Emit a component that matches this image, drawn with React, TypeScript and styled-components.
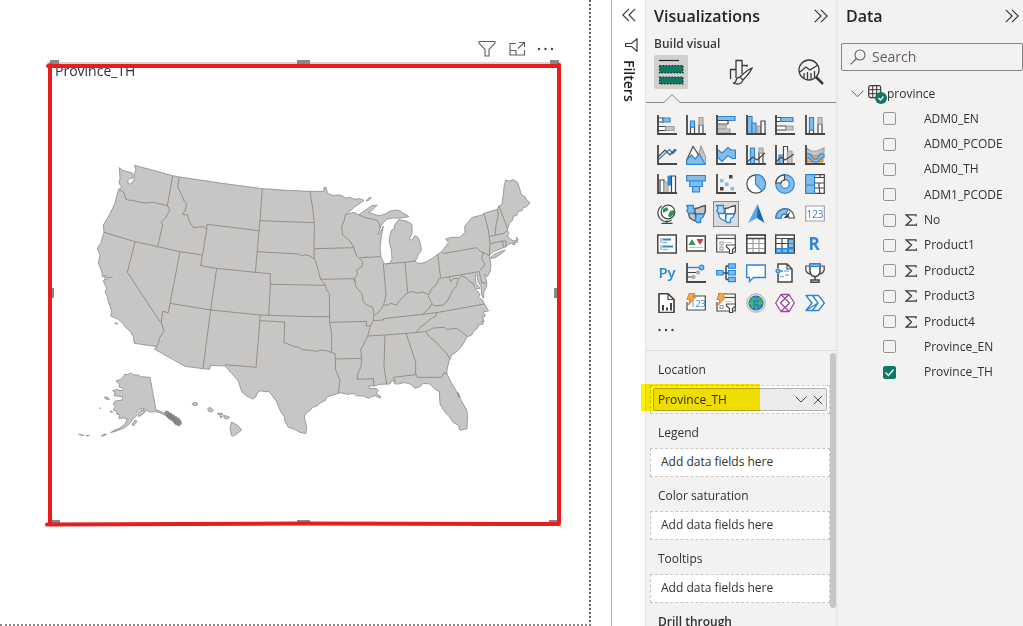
import React from "react";
import styled, { createGlobalStyle, css } from "styled-components";

const ink = "#484644";
const blue = "#2b88d8";
const sky = "#83bdeb";
const gray = "#a19f9d";
const silver = "#c8c6c4";

const GlobalStyle = createGlobalStyle`
  * { box-sizing: border-box; }
  body {
    margin: 0;
    background: #fff;
    color: #323130;
    font-family: "Open Sans", "Noto Sans", sans-serif;
    font-size: 12px;
    line-height: 16px;
  }
  button, input { font: inherit; color: inherit; }
  h2, h3, ul { margin: 0; padding: 0; font: inherit; }
  svg { display: block; }
`;

const Workspace = styled.div`
  display: flex;
  height: 100vh;
  overflow: hidden;
`;

/* ---------- report canvas ---------- */

const Canvas = styled.main`
  flex: 1;
  min-width: 0;
  padding-right: 20px;
  display: flex;
`;

const ReportPage = styled.div`
  flex: 1;
  min-width: 0;
  padding: 36px 28px 0 47px;
  border-right: 2px dotted #605e5c;
  border-bottom: 2px dotted #8a8886;
`;

const VisualTools = styled.div`
  display: flex;
  justify-content: flex-end;
  align-items: center;
  gap: 10px;
  height: 26px;
  padding-right: 7px;
`;

const IconButton = styled.button`
  display: flex;
  align-items: center;
  justify-content: center;
  padding: 0;
  border: 0;
  background: none;
  color: #484644;
  min-width: 14px;
  height: 24px;
`;

const Visual = styled.section`
  position: relative;
  height: 464px;
  max-width: 514px;
  padding: 0 21px 0 8px;
  border-top: 2px solid #d8d6d4;
`;

const VisualTitle = styled.h3`
  height: 13px;
  font-size: 14px;
  line-height: 13px;
`;

const MapFrame = styled.div`
  padding: 78px 0 0 15px;
`;

const Annotation = styled.svg`
  position: absolute;
  left: 0;
  top: -2px;
  width: 100%;
  height: 466px;
  overflow: visible;
`;

/* ---------- panes ---------- */

const FiltersPane = styled.aside`
  width: 34px;
  flex: none;
  display: flex;
  flex-direction: column;
  align-items: center;
  padding: 3px 0 0;
  border-left: 1px solid #b3b0ad;
  background: #fff;
`;

const FilterGlyph = styled.div`
  padding: 11px 0 8px 6px;
`;

const VerticalTitle = styled.h2`
  writing-mode: vertical-rl;
  font-size: 14px;
  font-weight: 600;
  line-height: 16px;
  color: #252423;
`;

const Pane = styled.aside<{ $width: number }>`
  width: ${(p) => p.$width}px;
  flex: none;
  display: flex;
  flex-direction: column;
  background: #f3f2f1;
`;

const VizPane = styled(Pane)`
  border-left: 1px solid #e6e4e2;
`;

const DataPane = styled(Pane)`
  border-left: 2px solid #eae8e6;
`;

const PaneHeader = styled.header<{ $left: number; $right: number }>`
  display: flex;
  justify-content: space-between;
  align-items: center;
  height: 32px;
  padding: 0 ${(p) => p.$right}px 0 ${(p) => p.$left}px;
`;

const PaneTitle = styled.h2`
  font-size: 16px;
  font-weight: 600;
  line-height: 20px;
  color: #252423;
`;

const SubTitle = styled.h3`
  padding: 4px 0 3px 8px;
  font-weight: 600;
  color: #3b3a39;
`;

const ModeTabs = styled.div`
  display: flex;
  gap: 36px;
  padding-left: 8px;
`;

const ModeTab = styled.button<{ $active?: boolean }>`
  width: 34px;
  height: 34px;
  padding: 0;
  border: 0;
  border-radius: 2px;
  display: flex;
  align-items: center;
  justify-content: center;
  background: ${(p) => (p.$active ? "#d2d0ce" : "none")};
`;

const Notch = styled.div`
  display: flex;
  height: 14px;
  align-items: flex-end;
  &::before, &::after {
    content: "";
    height: 1px;
    background: #8a8886;
  }
  &::before { width: 17px; }
  &::after { flex: 1; }
`;

const Gallery = styled.div`
  display: grid;
  grid-template-columns: repeat(6, 1fr);
  grid-template-rows: repeat(7, 1fr);
  width: 178px;
  height: 208px;
  margin: 7px 0 0 6px;
  flex: none;
`;

const VisualType = styled.button<{ $selected?: boolean }>`
  place-self: center;
  width: 26px;
  height: 26px;
  padding: 0;
  display: flex;
  align-items: center;
  justify-content: center;
  border: 1px solid transparent;
  background: none;
  ${(p) =>
    p.$selected &&
    css`
      border-color: #8a8886;
      background: #dddbd9;
    `}
`;

const MoreRow = styled.div`
  height: 33px;
  padding-left: 12px;
  border-bottom: 1px solid #dedcda;
  flex: none;
`;

const Wells = styled.div`
  display: flex;
  flex: 1;
  min-height: 0;
`;

const WellList = styled.div`
  flex: 1;
  padding-left: 4px;
`;

const WellLabel = styled.h3<{ $strong?: boolean }>`
  height: 34px;
  padding: 11px 0 0 8px;
  font-weight: ${(p) => (p.$strong ? 600 : 400)};
`;

const WellBox = styled.div`
  position: relative;
  height: 29px;
  padding: 2px;
  border: 1px dashed #c8c6c4;
  background: #fff;
`;

const Placeholder = styled.p`
  margin: 0;
  padding: 2px 8px 0;
  line-height: 18px;
`;

const FieldPill = styled.div`
  display: flex;
  align-items: center;
  gap: 6px;
  height: 23px;
  padding: 0 3px 0 4px;
  border: 1px solid #b3b0ad;
  border-radius: 2px;
  background: #edebe9;
`;

const FieldPillName = styled.span`
  flex: 1;
`;

const PillButton = styled(IconButton)`
  min-width: 10px;
  height: 20px;
`;

const Highlight = styled.div`
  position: absolute;
  left: -10px;
  top: -2px;
  width: 119px;
  height: 27px;
  background: #fff000;
  mix-blend-mode: multiply;
  pointer-events: none;
`;

const ScrollThumb = styled.div`
  width: 6px;
  height: 255px;
  margin-top: 2px;
  border-radius: 3px;
  background: #c8c6c4;
`;

const SearchBox = styled.label`
  display: flex;
  align-items: center;
  gap: 6px;
  height: 28px;
  margin: 11px 0 0 3px;
  padding-left: 8px;
  border: 1px solid #8a8886;
  border-radius: 2px;
`;

const SearchInput = styled.input`
  flex: 1;
  min-width: 0;
  padding: 0;
  border: 0;
  outline: 0;
  background: none;
  font-size: 14px;
  line-height: 20px;
  &::placeholder { color: #605e5c; opacity: 1; }
`;

const TableRow = styled.div`
  display: flex;
  align-items: center;
  height: 25px;
  margin-top: 10px;
  padding-left: 13px;
`;

const TableGlyph = styled.div`
  padding-left: 4px;
`;

const FieldList = styled.ul`
  display: grid;
  grid-template-rows: repeat(11, 1fr);
  height: 279px;
  list-style: none;
`;

const FieldItem = styled.li`
  display: flex;
  align-items: center;
`;

const FieldLabel = styled.label`
  display: grid;
  grid-template-columns: 22px 19px auto;
  align-items: center;
  padding-left: 45px;
`;

const Tick = styled.input`
  appearance: none;
  width: 13px;
  height: 13px;
  margin: 0;
  border: 1px solid #979593;
  border-radius: 2px;
  &:checked {
    border-color: #117865;
    background: #117865;
  }
`;

const TickCell = styled.span`
  display: grid;
  width: 13px;
  > * { grid-area: 1 / 1; }
`;

/* ---------- small glyphs ---------- */

const DoubleChevron = ({ left }: { left?: boolean }) => (
  <svg width="14" height="14" viewBox="0 0 14 14" fill="none" stroke="#3b3a39" strokeWidth="1.2">
    <path d={left ? "M7 .8L.8 7L7 13.2M13.2 .8L7 7L13.2 13.2" : "M.8 .8L7 7L.8 13.2M7 .8L13.2 7L7 13.2"} />
  </svg>
);

const Dots = ({ size = 16 }: { size?: number }) => (
  <svg width={size} height="4" viewBox="0 0 16 4" fill="#484644">
    <circle cx="1.5" cy="2" r="1.2" />
    <circle cx="8" cy="2" r="1.2" />
    <circle cx="14.5" cy="2" r="1.2" />
  </svg>
);

/* ---------- visual type icons, 20 x 20 ---------- */

const b = { fill: sky, stroke: blue, strokeWidth: 1.2 };
const w = { fill: "#fff", stroke: ink, strokeWidth: 1.2 };
const g = { fill: silver, stroke: gray, strokeWidth: 1.2 };
const n = { fill: "none", stroke: ink, strokeWidth: 1.2 };

const Axis = () => <path d="M1 0V19H20" fill="none" stroke={ink} strokeWidth="1.8" />;
const Bolt = () => <path d="M3.5 0H9L6.8 4H9.5L2.5 12L4 6.5H.8Z" fill="#f7a64a" stroke="#c9701a" strokeWidth=".8" />;
const Funnel = () => <path d="M10.5 11H19.5V13L16.5 15.5V19.5H13.5V15.5L10.5 13Z" {...w} />;

const Usa = ({ filled }: { filled?: boolean }) => (
  <>
    <path d="M9 4.500L12.500 4L15 2.500L19.300 1.500V7L18.500 10H9Z" fill={filled ? silver : "#fff"} stroke={ink} strokeWidth="1.3" />
    <path d="M2.500 9.500H9.500V17L6 15.500L3.500 13.500Z" fill={filled ? silver : "#fff"} stroke={filled ? ink : blue} strokeWidth="1.2" />
    <path d="M10.500 10H18.300L17 13L14.500 15V18.500H11L9.500 16.500Z" fill={filled ? sky : "#fff"} stroke={blue} strokeWidth="1.3" />
    <path d="M.800 1.500H7.500V4.500L9 6.500L7.500 9.500H2.500L.800 6.500L2 4.500Z" fill={filled ? sky : "#b5d8f5"} stroke={blue} strokeWidth="1.3" />
  </>
);

const visualTypes: { name: string; art: React.ReactNode; selected?: boolean }[] = [
  { name: "Stacked bar chart", art: <><path d="M1 3H6V7H1Z" {...w} /><path d="M6 3H13V7H6Z" {...b} /><path d="M1 11.500H9V15.500H1Z" {...w} /><path d="M9 11.500H17V15.500H9Z" {...g} /><Axis /></> },
  { name: "Stacked column chart", art: <><path d="M4.500 12H8.500V19H4.500Z" {...w} /><path d="M4.500 6H8.500V12H4.500Z" {...b} /><path d="M13 10H17V19H13Z" {...w} /><path d="M13 2.500H17V10H13Z" {...g} /><Axis /></> },
  { name: "Clustered bar chart", art: <><path d="M1 1.500H19V5.500H1Z" {...b} /><path d="M1 5.500H12V9H1Z" {...w} /><path d="M1 10H10V14H1Z" {...g} /><path d="M1 14H14V18H1Z" {...g} /><Axis /></> },
  { name: "Clustered column chart", art: <><path d="M1.500 1.500H6V19H1.500Z" {...b} /><path d="M6 8H10V19H6Z" {...b} /><path d="M11 11H15V19H11Z" {...g} /><path d="M15 6H19V19H15Z" {...w} /><Axis /></> },
  { name: "100% stacked bar chart", art: <><path d="M1 2.500H6V6.500H1Z" {...w} /><path d="M6 2.500H18V6.500H6Z" {...b} /><path d="M1 11H11V15H1Z" {...w} /><path d="M11 11H18V15H11Z" {...g} /><Axis /></> },
  { name: "100% stacked column chart", art: <><path d="M4.500 15H8.500V19H4.500Z" {...w} /><path d="M4.500 2.500H8.500V15H4.500Z" {...b} /><path d="M13 9H17V19H13Z" {...w} /><path d="M13 2.500H17V9H13Z" {...g} /><Axis /></> },

  { name: "Line chart", art: <><path d="M1 15L12.500 4.500L16 8.500L19.500 5" fill="none" stroke={blue} strokeWidth="1.3" /><path d="M1 12L8 5L13 10L18.500 4" {...n} /><Axis /></> },
  { name: "Area chart", art: <><path d="M10 19L15 1L19.500 12V19Z" {...g} /><path d="M.700 15L7 1.500L14 12L10 19H.700Z" {...w} /><path d="M.700 19.300V15L5.500 10L9 14L13.500 9L19 19.300Z" {...b} /></> },
  { name: "Stacked area chart", art: <><path d="M1 4L6 8L12 2.500L15 5H19.500V13.500H16L12 10.500L6 16.500L1 11.500Z" {...b} /><Axis /></> },
  { name: "Line and stacked column chart", art: <><path d="M4.500 3H8.500V19H4.500Z" {...b} /><path d="M13 8H17V19H13Z" {...w} /><path d="M13 3H17V8H13Z" {...g} /><path d="M1 17L7 12L11 15L19 8" {...n} /><Axis /></> },
  { name: "Line and clustered column chart", art: <><path d="M4 10H8.500V19H4Z" {...b} /><path d="M8.500 1.500H12.500V19H8.500Z" {...w} /><path d="M12.500 6H17V19H12.500Z" {...g} /><path d="M1 17L6 12L10 15L19 9" {...n} /><Axis /></> },
  { name: "Ribbon chart", art: <><path d="M2 9.500H18V17H2Z" fill="#f7a64a" stroke="#d6801f" /><path d="M1 3L6 6H12L19 3V7L13 10.500H7L1 7Z" {...g} /><path d="M1 9H5L9 14H12L15 9H19V12.500H17L13 17H8L4 12.500H1Z" {...b} /><Axis /></> },

  { name: "Waterfall chart", art: <><path d="M3 6H7V19H3Z" {...w} /><path d="M7 8H11V19H7Z" {...g} /><path d="M11 2H14.500V11H11Z" fill={blue} stroke={blue} /><path d="M14.500 2H18.500V19H14.500Z" {...w} /><Axis /></> },
  { name: "Funnel", art: <><path d="M.700 1.500H19.300V7H.700Z" {...b} /><path d="M3.700 7H16.300V12.500H3.700Z" {...b} /><path d="M6.700 12.500H13.500V18H6.700Z" {...b} /></> },
  { name: "Scatter chart", art: <><path d="M13 1H16.500V4.500H13ZM4 13H7.500V16.500H4Z" fill={ink} /><path d="M4 5H7.500V8.500H4ZM9 8.500H12.500V12H9ZM14.500 13H18V16.500H14.500Z" fill={sky} /><Axis /></> },
  { name: "Pie chart", art: <><circle cx="10" cy="10" r="9.2" {...w} /><path d="M9.500 .700A9.200 9.200 0 0 1 16 17L9.500 10Z" {...b} /></> },
  { name: "Donut chart", art: <><circle cx="10" cy="10" r="6.8" fill="none" stroke={blue} strokeWidth="6.200" /><circle cx="10" cy="10" r="6.8" fill="none" stroke={sky} strokeWidth="3.800" /><path d="M.800 9A9 9 0 0 1 9.500 .800V6A4 4 0 0 0 6 9Z" {...w} /></> },
  { name: "Treemap", art: <><path d="M.700 .700H19.300V19.300H.700Z" {...w} /><path d="M.700 .700H9.500V11H.700ZM.700 11H9.500V19.300H.700Z" {...b} /><path d="M9.500 3.500H19M9.500 9H19M9.500 14H19M14 9V14M15 1V3.500M14.500 14V19" {...n} /></> },

  { name: "Map", art: <><path d="M4.500 2A8.500 8.500 0 0 0 14.500 16M10 16.500V19M4.500 19.300H15.500" {...n} /><circle cx="11" cy="8" r="6.8" {...w} /><path d="M6 5L10 3L11.500 6L8 8L6 9ZM13 7L17 6V10L13.500 13.500L11 12Z" fill="#1f9b52" /></> },
  { name: "Filled map", art: <Usa filled /> },
  { name: "Shape map", art: <Usa />, selected: true },
  { name: "Azure map", art: <><path d="M11.500 0L2 19L11 14Z" fill="#5aa9e3" /><path d="M11.500 0L18.500 19L11 14Z" fill="#1569b3" /></> },
  { name: "Gauge", art: <><path d="M.700 14A9.300 9.300 0 0 1 19.300 14H14A4 4 0 0 0 6 14Z" {...w} /><path d="M1 14A9 9 0 0 1 13 5.500L11 10A4 4 0 0 0 6 14Z" {...b} /><path d="M8.500 14L15.500 7L12.500 14Z" fill={ink} /></> },
  { name: "Card", art: <><path d="M.700 2H19.300V17H.700Z" {...w} stroke={gray} /><text x="10" y="13.5" textAnchor="middle" fontSize="10" fill={blue}>123</text></> },

  { name: "Multi-row card", art: <><path d="M.700 1H19.300V19H.700Z" {...w} strokeWidth="1.6" /><path d="M4 4V9M4 11V16" stroke={gray} strokeWidth="1.2" /><path d="M5.500 5.500H14M5.500 12.500H16" stroke={blue} strokeWidth="1.8" /><path d="M5.500 8.500H10M5.500 15.500H11" stroke={sky} strokeWidth="1.3" /></> },
  { name: "KPI", art: <><path d="M.700 2H19.300V17H.700Z" {...w} strokeWidth="1.5" /><path d="M2.500 11L6 5L9.500 11Z" fill="#2e9e5b" /><path d="M10.500 5H17.500L14 11Z" fill="#d83b3b" /><path d="M3 13.500H17" stroke={silver} /></> },
  { name: "Slicer", art: <><path d="M.700 1H19.300V18H.700Z" {...w} /><path d="M1 4.500H19" {...n} /><path d="M4 8H7V11H4ZM4 13H7V16H4Z" {...n} stroke={gray} /><path d="M9 8.500H16" stroke={silver} /><Funnel /></> },
  { name: "Table", art: <><path d="M.700 1H19.300V19H.700Z" {...w} /><path d="M7 4V19M13 4V19M1 9.500H19M1 14.500H19" fill="none" stroke={gray} strokeWidth="1.200" /><path d="M.700 1H19.300V19H.700ZM1 4.500H19" {...n} strokeWidth="1.500" /></> },
  { name: "Matrix", art: <><path d="M.700 1H19.300V19H.700Z" {...w} strokeWidth="1.5" /><path d="M13 4.500H19V19H1V14H13Z" fill={blue} /><path d="M14 10H18V13H14ZM8 15.500H12V18H8ZM2 15.500H6V18H2ZM14 15.500H18V18H14ZM14 6H18V9H14Z" fill={sky} /><path d="M1 4.500H19M1 9.500H13M7 4V14M13 4V14" {...n} /></> },
  { name: "R script visual", art: <text x="9" y="16" textAnchor="middle" fontSize="17" fontWeight="700" fill={blue}>R</text> },

  { name: "Python visual", art: <text x="10" y="15" textAnchor="middle" fontSize="15" fontWeight="600" fill={blue}>Py</text> },
  { name: "Key influencers", art: <><path d="M1 4.500H13" stroke={blue} strokeWidth="1.4" /><circle cx="15.500" cy="4.500" r="2.300" {...b} /><path d="M1 9.500H10M1 14H6" stroke={ink} /><circle cx="12" cy="9.500" r="1.400" {...g} /><circle cx="7.500" cy="14" r="1.400" {...g} /><Axis /></> },
  { name: "Decomposition tree", art: <><path d="M7 10H13M10 3V16.500M10 3H13M10 16.500H13" {...n} strokeWidth="1.500" /><path d="M.700 7.500H7V12H.700ZM12.500 .800H19.300V5.200H12.500ZM12.500 7.500H19.300V12H12.500ZM12.500 14.300H19.300V18.700H12.500Z" {...b} /></> },
  { name: "Q&A", art: <path d="M.700 2H19.300V14.500H7.500L3.500 18.500V14.500H.700Z" fill="#fff" stroke={blue} strokeWidth="1.4" /> },
  { name: "Smart narrative", art: <><path d="M3 1H12L17 6V19H3Z" {...w} strokeWidth="1.5" /><path d="M12 1V6H17" {...n} /><path d="M3 5.500V10.500" stroke="#f3f2f1" strokeWidth="3" /><path d="M5 8H8" stroke={blue} strokeWidth="1.4" /><circle cx="3" cy="8" r="2" {...b} /><path d="M9 8H14M5 13.500H9M10 12H14" stroke={sky} strokeWidth="1.3" /></> },
  { name: "Goals", art: <><path d="M5 3H.800V7Q2 11 6 11M15 3H19.200V7Q18 11 14 11" {...n} /><path d="M5 1H15V9Q14 13.500 10 13.500Q6 13.500 5 9Z" {...w} strokeWidth="1.500" /><path d="M5 1H15V3.500H5Z" {...b} /><path d="M10 13.500V17M6 17H14V19.300H6Z" {...n} strokeWidth="1.500" /></> },

  { name: "Paginated report", art: <><path d="M2 .700H11L17 6.500V19.500H2Z" {...w} strokeWidth="1.700" /><path d="M11 1V6.500H17" {...n} /><path d="M6 17.500V12M10 17.500V14.500M14 17.500V10" stroke={ink} strokeWidth="2" /></> },
  { name: "Card (new)", art: <><path d="M3 3H19.300V17H1V9" {...w} /><text x="12" y="14" textAnchor="middle" fontSize="9" fill={blue}>123</text><Bolt /></> },
  { name: "Slicer (new)", art: <><path d="M2 1H19.300V18H1V9" {...w} /><path d="M8 4.500H19" {...n} /><path d="M4 12.500H7V15.500H4Z" {...n} stroke={gray} /><path d="M10 8.500H16" stroke={silver} /><Funnel /><Bolt /></> },
  { name: "ArcGIS map", art: <><circle cx="10" cy="10" r="9.300" fill="#e1dfdd" stroke={gray} strokeWidth=".8" /><circle cx="10" cy="10" r="7.500" fill="#1b74bd" /><path d="M3.500 7L8 4L10 6L7 9L8.500 13L6 15L3.500 11ZM12 4L16.500 7L16 12L13 14L11.500 10ZM9 15L12 14.500L11 17Z" fill="#3fae58" /><path d="M10 2.500V17.500M2.500 10H17.500M5 4.500Q10 8 15 4.500M5 15.500Q10 12 15 15.500" stroke="#7fc1ea" strokeWidth=".5" fill="none" /></> },
  { name: "Power Apps", art: <g fill="none" stroke="#a33fa8" strokeWidth="1.300" strokeLinejoin="round"><path d="M6 1.500H14L19.300 10L14 18.500H6L.700 10Z" fill="#fff" /><path d="M6 1.500L14.500 10L10 14.500L5.500 10L14 1.500M10 5.500L14.500 10M10 14.500L6 18.500M10 14.500L14 18.500" /></g> },
  { name: "Power Automate", art: <g fill="none" stroke={blue} strokeWidth="1.400" strokeLinejoin="round"><path d="M1 2.500H13.500L19.300 10L13.500 17.500H1L7 10Z" fill="#fff" /><path d="M7.500 2.500L13 10L1 17.500M13 10L7.500 17.500" /></g> },
];

/* ---------- map of the United States ---------- */

// Points are traced on four sheets; each piece is [dx, dy, points].
type Piece = [number, number, string];
const NW: [number, number] = [0, 0];
const NE: [number, number] = [690, 0];
const SW: [number, number] = [0, 435];
const SE: [number, number] = [690, 435];

const join = (...pieces: Piece[]) =>
  pieces
    .map(([dx, dy, pts]) =>
      pts
        .split(" ")
        .map((p) => {
          const [x, y] = p.split(",").map(Number);
          return `${x + dx},${y + dy}`;
        })
        .join(" ")
    )
    .join(" ");

const mainland = join(
  [...NW, "148,38 158,46 172,50 186,54 190,62 188,70 181,70 173,76 175,86 183,87 188,80 193,72 192,58 198,44 193,31 250,46 308,62 330,66 450,84 577,101 650,106 720,109"],
  [...NE, "72,109 72,97 79,98 82,115 100,122 112,120 125,121 132,127 140,130 148,126 155,129 165,133 178,131 192,136 165,155 150,168 137,178 150,175 162,172 175,180 200,163 215,152 232,150 217,165 205,172 220,177 235,182 255,178 270,168 290,165 300,168 310,175 320,180 327,185 310,188 296,190 280,189 262,192 250,203 243,213 234,240 240,233 250,214 248,225 243,250 240,280 243,305 250,322 258,328 270,325 276,312 274,285 268,262 268,248 275,225 283,222 284,210 296,194 318,198 334,206 336,215 336,235 328,252 334,256 345,242 355,248 362,270 364,287 355,298 352,308 345,318 352,324 365,325 380,320 400,308 413,298 425,290 440,270 445,262 437,252 455,247 480,247 495,232 494,215 505,200 515,188 545,180 552,175 592,163 597,153 605,150 610,120 612,95 617,75 625,78 640,74 653,82 660,105 665,120 675,125 680,135 690,143 680,155 670,158 665,168 655,168 650,182 640,183 638,195 628,205 625,215 622,225 627,235 622,240 628,250 640,258 652,255 648,247 654,252 652,262 636,264 625,268 618,275 600,282 580,290 568,302 570,312 573,330 570,350 562,365 553,358 560,378 560,395 552,410 550,430 545,420 543,395 534,380 532,360 526,360 528,385 540,400 526,402 540,418 535,428 548,435"],
  [...SE, "553,12 566,33 550,35 556,48 548,50 552,66 545,64 550,72 535,75 532,85 520,95 515,105 500,112 492,128 480,145 470,155 455,165 448,180 442,205 440,220 455,250 470,275 480,295 500,330 503,350 501,386 480,391 475,375 460,368 448,350 438,340 427,325 420,312 418,275 405,268 390,252 370,250 360,260 345,265 335,255 325,250 310,248 295,252 285,252 277,240 270,252 240,253 222,258 206,258 208,265 230,266 235,272 228,280 243,290 240,295 225,287 215,290 205,295 190,288 170,287 160,280 145,283 120,278 100,285 82,290 75,302 62,308 50,318 38,322 30,332 22,335 13,348 16,365 20,380 18,400"],
  [...SW, "702,400 690,397 672,387 655,382 645,365 643,350 632,335 620,305 598,275 585,275 572,272 562,278 558,290 548,297 530,288 515,275 505,243 485,220 465,198 421,196 419,208 399,206 345,199 253,147 262,140 193,130 190,110 180,93 168,83 158,70 145,58 122,48 126,35 115,5"],
  [...NW, "112,425 105,410 110,400 100,378 106,370 97,362 94,345 85,325 90,300 82,280 92,265 102,232 100,210 118,180 135,145 145,105 155,95 147,85 150,70"]
);

const borders = [
  join([...NW, "145,103 160,110 168,132 178,136 190,136 200,140 225,144 250,142 292,152"]),
  join([...NW, "308,62 292,152 300,165 285,190 273,202 278,210 263,275"]),
  join([...NW, "102,232 195,260 263,275 330,290 397,300"]),
  join([...NW, "328,66 323,95 335,120 342,138 350,145 346,165 338,178 353,180 358,200 370,218 385,216 400,215 408,222 411,208 566,227"]),
  join([...NW, "411,220 392,332 440,340 556,352 601,356 601,388"], [...SW, "596,48"]),
  join([...NW, "577,101 570,197 556,352"]),
  join([...NW, "570,197 732,203"]),
  join([...NW, "561,290 685,297 695,303 705,299 720,303 733,312"]),
  join([...NW, "601,388 764,391"]),
  join([...NW, "195,260 172,352"], [...SW, "272,68"]),
  join([...NW, "330,290 300,445"], [...SW, "295,38 278,34 274,68 282,93 268,115 266,130 258,140"]),
  join([...SW, "300,10 422,30 570,45 720,50 778,50"]),
  join([...NW, "440,340 422,465"], [...SW, "399,205"]),
  join([...SW, "571,45 558,202 465,194"]),
  join([...SW, "571,62 644,66 642,128 655,132 668,138 685,142 700,150 715,150"], [...SE, "50,154 65,150 80,152 95,158 105,160 107,210 120,240 115,280"]),
  join([...NE, "30,109 38,160 43,205 42,280 43,310 52,335 58,360 62,372 75,388 80,405 88,415"], [...SE, "89,67 95,100 95,158"]),
  join([...NE, "45,281 162,278"]),
  join([...NE, "62,373 160,371 170,380"]),
  join([...NE, "137,178 133,195 125,215 128,240 150,258 162,278 168,300 188,320 186,335 170,345 172,360 162,372 168,395 185,415 190,440"], [...SE, "200,15 218,22 222,45 220,62 212,75 203,108 190,135 182,150 185,175 183,200 172,225 172,238 220,236 222,258"]),
  join([...NE, "180,308 243,305"]),
  join([...NE, "175,178 195,188 230,195 237,205 240,218"]),
  join([...NE, "250,325 258,420"], [...SE, "252,10 245,25 235,38 224,45"]),
  join([...NE, "258,326 315,322 345,318"]),
  join([...NE, "315,322 323,412"]),
  join([...SE, "252,14 262,16 272,10 290,15 298,2 308,-8 318,-18 334,-26 350,-21 370,-24 385,-15 394,-33 408,-44 418,-66"]),
  join([...NE, "413,298 422,370 535,350"]),
  join([...NE, "425,292 430,296 530,278 540,288 550,294 545,310 555,330 540,345"]),
  join([...NE, "548,292 568,302"]),
  join([...NE, "552,175 565,225 570,265 568,302"]),
  join([...NE, "592,163 595,180 588,210 585,240"]),
  join([...NE, "597,153 622,220"]),
  join([...NE, "570,244 612,235 622,226"]),
  join([...NE, "570,266 608,258 618,258 618,275"]),
  join([...NE, "608,258 610,278"]),
  join([...NE, "537,348 546,385 557,383"]),
  join([...NE, "448,366 452,380 462,370 475,372 485,362 500,370 510,380 520,385 524,398"]),
  join([...NE, "475,374 468,395 458,405 452,418 444,435"], [...SE, "430,15 405,18 395,10 385,-12"]),
  join([...SE, "395,12 385,28 368,42"]),
  join([...SE, "220,62 250,60 250,56 368,43 410,38 553,12"]),
  join([...SE, "410,38 408,48 390,58 375,72 360,82 350,96"]),
  join([...SE, "203,108 255,105 318,100 378,95 400,84 432,82 440,88 470,85 502,108"]),
  join([...SE, "378,97 388,110 410,128 425,145 440,160 450,178"]),
  join([...SE, "318,100 345,180 347,195 347,222 352,232 425,232 430,220 442,220"]),
  join([...SE, "287,248 280,232 347,224"]),
  join([...SE, "255,107 252,200 260,252"]),
  join([...SE, "90,67 200,64 198,78 212,78"]),
  join([...SE, "105,177 183,175"]),
];

const alaska = join([...SW, "182,218 188,224 205,225 212,230 240,232 258,330 268,333 280,338 295,345 305,350 318,358 300,355 284,346 270,338 258,335 240,336 228,330 218,338 222,325 208,328 198,340 200,347 188,358 180,370 162,384 140,393 122,398 132,391 150,384 165,372 172,356 160,354 146,355 150,345 140,342 142,335 130,330 136,320 130,312 136,303 158,300 158,290 132,287 136,278 128,272 142,268 150,272 162,270 155,262 148,262 148,252 138,243 155,237 165,222 174,224"]);

const panhandle = [
  join([...SW, "284,338 290,332 302,340 318,350 330,358 335,370 328,378 315,372 308,362 296,356"]),
  join([...SW, "295,340 312,352 326,370"]),
  join([...SW, "290,346 305,352 320,374"]),
];

const islands = [
  join([...SW, "367,311 376,306 383,311 380,317 370,316"]),
  join([...SW, "413,326 420,322 430,331 424,336 416,334"]),
  join([...SW, "442,340 456,340 458,344 445,344"]),
  join([...SW, "449,348 456,348 454,354"]),
  join([...SW, "460,346 470,348 479,352 470,357 463,354"]),
  join([...SW, "485,366 503,376 515,390 500,402 488,409 484,405 480,385"]),
  join([...SW, "186,372 196,360 201,364 190,378"]),
  join([...SW, "204,340 214,330 226,334 220,342 206,350"]),
  join([...SW, "103,291 112,291 118,298 110,299"]),
  join([...SW, "120,333 128,335 122,337"]),
  join([...SW, "90,323 93,325 90,326"]),
  join([...SW, "94,408 102,402 110,403 100,408"]),
  join([...SW, "26,402 32,405 38,406 42,407"]),
  join([...SW, "48,406 58,407 52,408"]),
  join([...SW, "134,69 144,71 138,72"]),
  join([...NE, "198,138 208,128 214,128 206,136"]),
  join([...NE, "570,310 582,298 605,288 616,286 604,296 585,308"]),
  join([...NE, "638,266 646,267 640,270"]),
];

const StateMap = () => (
  <svg width="100%" viewBox="0 0 1410 870" role="img" aria-label="Map of the United States" fill="#c8c6c4" stroke="#8f8d8b" strokeWidth="2.5" strokeLinejoin="round">
    <polygon points={mainland} />
    <polygon points={alaska} />
    {borders.map((d, i) => <polyline key={i} points={d} fill="none" stroke="#858381" />)}
    {islands.map((d, i) => <polygon key={i} points={d} />)}
    {panhandle.map((d, i) => <polygon key={i} points={d} fill="#8f8d8b" stroke="#7a7876" strokeWidth="3" strokeDasharray="7 3" />)}
    <path d="M97 365L108 362L112 368L128 367M112 372L106 376" fill="none" />
    <path d="M1162 712L1170 728" strokeWidth="5" />
  </svg>
);

/* ---------- page ---------- */

const fields = [
  { name: "ADM0_EN" },
  { name: "ADM0_PCODE" },
  { name: "ADM0_TH" },
  { name: "ADM1_PCODE" },
  { name: "No", sum: true },
  { name: "Product1", sum: true },
  { name: "Product2", sum: true },
  { name: "Product3", sum: true },
  { name: "Product4", sum: true },
  { name: "Province_EN" },
  { name: "Province_TH", checked: true },
];

const Sigma = () => (
  <svg width="12" height="12" viewBox="0 0 12 12" fill="none" stroke="#3b3a39" strokeWidth="1.3">
    <path d="M11 2.500V.800H1L6.500 6L1 11.200H11.500V9.500" />
  </svg>
);

export default function App() {
  return (
    <>
      <GlobalStyle />
      <Workspace>
        <Canvas>
          <ReportPage>
            <VisualTools>
              <IconButton aria-label="Filters on this visual">
                <svg width="20" height="18" viewBox="0 0 20 18" fill="none" stroke="#605e5c" strokeWidth="1.1">
                  <path d="M2 1.500H18V3L12 9.500V16H8V9.500L2 3Z" />
                </svg>
              </IconButton>
              <IconButton aria-label="Focus mode">
                <svg width="20" height="16" viewBox="0 0 20 16" fill="none" stroke="#605e5c" strokeWidth="1.1">
                  <path d="M9 2.500H3V14H17.500V9M3 9.500H9V14M12 1.500H17.500V6M17.500 1.500L11 7.500" />
                </svg>
              </IconButton>
              <IconButton aria-label="More options"><Dots size={17} /></IconButton>
            </VisualTools>
            <Visual>
              <VisualTitle>Province_TH</VisualTitle>
              <MapFrame><StateMap /></MapFrame>
              <Annotation viewBox="0 0 514 466" preserveAspectRatio="none" aria-hidden="true">
                <path d="M3 0H12M250 0H263M503 0H512M5 226V236M509 226V236M3 460H13M250 460H263M502 460H511" stroke="#8a8886" strokeWidth="4" />
                <path d="M1 4L511 4M3 3L3 461M0 462.500L250 461.500L512 462M512 3L512 461" stroke="#e81d1d" strokeWidth="4" strokeLinecap="round" fill="none" />
              </Annotation>
            </Visual>
          </ReportPage>
        </Canvas>

        <FiltersPane>
          <IconButton aria-label="Expand filters"><DoubleChevron left /></IconButton>
          <FilterGlyph>
            <svg width="13" height="14" viewBox="0 0 13 14" fill="none" stroke="#3b3a39" strokeWidth="1.2">
              <path d="M12 .800V13.200L6.500 8.500H.600V5.500H6.500Z" />
            </svg>
          </FilterGlyph>
          <VerticalTitle>Filters</VerticalTitle>
        </FiltersPane>

        <VizPane $width={191}>
          <PaneHeader $left={8} $right={8}>
            <PaneTitle>Visualizations</PaneTitle>
            <IconButton aria-label="Collapse visualizations"><DoubleChevron /></IconButton>
          </PaneHeader>
          <SubTitle>Build visual</SubTitle>
          <ModeTabs>
            <ModeTab $active aria-label="Build visual">
              <svg width="26" height="26" viewBox="0 0 26 26">
                <path d="M1 1.500H21" stroke="#252423" strokeWidth="1.2" />
                <path d="M1.500 6.500H25V14H1.500ZM1.500 18H25V25H1.500Z" fill="#117865" stroke="#252423" strokeWidth="1.2" strokeDasharray="1.5 1.5" />
              </svg>
            </ModeTab>
            <ModeTab aria-label="Format visual">
              <svg width="26" height="26" viewBox="0 0 26 26" fill="none" stroke="#3b3a39" strokeWidth="1.3">
                <path d="M2.500 20V10.500H8V1.500H14V15M8 10V19M14 6.500H19V8" />
                <path d="M24 9Q19 11 12 18L15 21Q22 14 24 9ZM12 18Q8 19 8 22Q7.500 24 5 24Q13 27 15 21" />
              </svg>
            </ModeTab>
            <ModeTab aria-label="Analytics">
              <svg width="26" height="26" viewBox="0 0 26 26" fill="none" stroke="#3b3a39" strokeWidth="1.3">
                <circle cx="11" cy="11" r="10" />
                <path d="M2 13L8 8L12 11L20 6M6 19V14M9.500 20V13M13 20V14M16.500 18.500V12" />
                <path d="M18 18L25 25" strokeWidth="2.5" />
              </svg>
            </ModeTab>
          </ModeTabs>
          <Notch>
            <svg width="18" height="9" viewBox="0 0 18 9" fill="none" stroke="#8a8886">
              <path d="M0 8.500H1L9 .700L17 8.500H18" />
            </svg>
          </Notch>
          <Gallery>
            {visualTypes.map((v) => (
              <VisualType key={v.name} $selected={v.selected} aria-label={v.name}>
                <svg width="20" height="20" viewBox="0 0 20 20">{v.art}</svg>
              </VisualType>
            ))}
          </Gallery>
          <MoreRow>
            <IconButton aria-label="Get more visuals"><Dots /></IconButton>
          </MoreRow>
          <Wells>
            <WellList>
              <WellLabel>Location</WellLabel>
              <WellBox>
                <FieldPill>
                  <FieldPillName>Province_TH</FieldPillName>
                  <PillButton aria-label="Field options">
                    <svg width="12" height="7" viewBox="0 0 12 7" fill="none" stroke="#484644"><path d="M.500 .500L6 6L11.500 .500" /></svg>
                  </PillButton>
                  <PillButton aria-label="Remove field">
                    <svg width="10" height="10" viewBox="0 0 10 10" fill="none" stroke="#484644"><path d="M1 1L9 9M9 1L1 9" /></svg>
                  </PillButton>
                </FieldPill>
                <Highlight />
              </WellBox>
              {["Legend", "Color saturation", "Tooltips"].map((label) => (
                <React.Fragment key={label}>
                  <WellLabel>{label}</WellLabel>
                  <WellBox><Placeholder>Add data fields here</Placeholder></WellBox>
                </React.Fragment>
              ))}
              <WellLabel $strong>Drill through</WellLabel>
            </WellList>
            <ScrollThumb />
          </Wells>
        </VizPane>

        <DataPane $width={187}>
          <PaneHeader $left={8} $right={4}>
            <PaneTitle>Data</PaneTitle>
            <IconButton aria-label="Collapse data"><DoubleChevron /></IconButton>
          </PaneHeader>
          <SearchBox>
            <svg width="16" height="16" viewBox="0 0 16 16" fill="none" stroke="#605e5c" strokeWidth="1.1">
              <circle cx="10" cy="6" r="5" />
              <path d="M6.500 9.500L.700 15.300" />
            </svg>
            <SearchInput type="text" placeholder="Search" aria-label="Search" />
          </SearchBox>
          <TableRow>
            <svg width="13" height="8" viewBox="0 0 13 8" fill="none" stroke="#605e5c"><path d="M.500 .700L6.500 6.700L12.500 .700" /></svg>
            <TableGlyph>
              <svg width="19" height="20" viewBox="0 0 19 20">
                <rect x=".7" y="1.7" width="12" height="12" rx="2" fill="none" stroke="#3b3a39" strokeWidth="1.2" />
                <path d="M4.700 2V14M8.700 2V14M1 5.700H13M1 9.700H13" stroke="#3b3a39" />
                <circle cx="13" cy="14" r="6" fill="#117865" />
                <path d="M10.500 14L12.500 16L15.500 12.500" fill="none" stroke="#fff" strokeWidth="1.3" />
              </svg>
            </TableGlyph>
            province
          </TableRow>
          <FieldList>
            {fields.map((f) => (
              <FieldItem key={f.name}>
                <FieldLabel>
                  <TickCell>
                    <Tick type="checkbox" defaultChecked={f.checked} />
                    {f.checked && (
                      <svg width="13" height="13" viewBox="0 0 13 13" fill="none" stroke="#fff" strokeWidth="1.2"><path d="M2.500 6.500L5.500 9.500L10.500 3.500" /></svg>
                    )}
                  </TickCell>
                  <span>{f.sum && <Sigma />}</span>
                  {f.name}
                </FieldLabel>
              </FieldItem>
            ))}
          </FieldList>
        </DataPane>
      </Workspace>
    </>
  );
}
